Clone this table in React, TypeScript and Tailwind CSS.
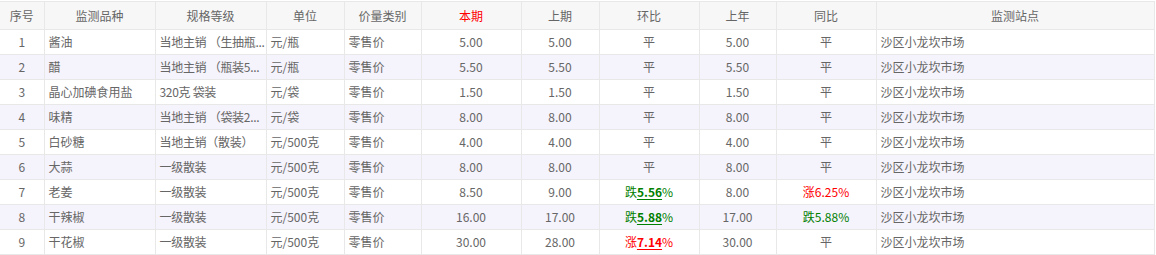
import React from 'react'

type Change = { dir: '跌' | '涨'; value: string } | null

type Row = {
  name: string
  spec: string
  unit: string
  type: string
  cur: string
  prev: string
  mom: Change
  lastYear: string
  yoy: Change
  site: string
}

// spec strings are already cut the way the source page shows them
const rows: Row[] = [
  { name: '酱油', spec: '当地主销 （生抽瓶...', unit: '元/瓶', type: '零售价', cur: '5.00', prev: '5.00', mom: null, lastYear: '5.00', yoy: null, site: '沙区小龙坎市场' },
  { name: '醋', spec: '当地主销 （瓶装5...', unit: '元/瓶', type: '零售价', cur: '5.50', prev: '5.50', mom: null, lastYear: '5.50', yoy: null, site: '沙区小龙坎市场' },
  { name: '晶心加碘食用盐', spec: '320克 袋装', unit: '元/袋', type: '零售价', cur: '1.50', prev: '1.50', mom: null, lastYear: '1.50', yoy: null, site: '沙区小龙坎市场' },
  { name: '味精', spec: '当地主销 （袋装2...', unit: '元/袋', type: '零售价', cur: '8.00', prev: '8.00', mom: null, lastYear: '8.00', yoy: null, site: '沙区小龙坎市场' },
  { name: '白砂糖', spec: '当地主销（散装）', unit: '元/500克', type: '零售价', cur: '4.00', prev: '4.00', mom: null, lastYear: '4.00', yoy: null, site: '沙区小龙坎市场' },
  { name: '大蒜', spec: '一级散装', unit: '元/500克', type: '零售价', cur: '8.00', prev: '8.00', mom: null, lastYear: '8.00', yoy: null, site: '沙区小龙坎市场' },
  { name: '老姜', spec: '一级散装', unit: '元/500克', type: '零售价', cur: '8.50', prev: '9.00', mom: { dir: '跌', value: '5.56' }, lastYear: '8.00', yoy: { dir: '涨', value: '6.25' }, site: '沙区小龙坎市场' },
  { name: '干辣椒', spec: '一级散装', unit: '元/500克', type: '零售价', cur: '16.00', prev: '17.00', mom: { dir: '跌', value: '5.88' }, lastYear: '17.00', yoy: { dir: '跌', value: '5.88' }, site: '沙区小龙坎市场' },
  { name: '干花椒', spec: '一级散装', unit: '元/500克', type: '零售价', cur: '30.00', prev: '28.00', mom: { dir: '涨', value: '7.14' }, lastYear: '30.00', yoy: null, site: '沙区小龙坎市场' },
]

function Mom({ c }: { c: Change }) {
  if (!c) return <span>平</span>
  const color = c.dir === '跌' ? 'text-[#008000]' : 'text-[#ff0000]'
  return (
    <span className={color}>
      {c.dir}
      <b className="underline underline-offset-2">{c.value}</b>%
    </span>
  )
}

function Yoy({ c }: { c: Change }) {
  if (!c) return <span>平</span>
  const color = c.dir === '跌' ? 'text-[#008000]' : 'text-[#ff0000]'
  return (
    <span className={color}>
      {c.dir}
      {c.value}%
    </span>
  )
}

const th = 'border border-[#e8e8e8] font-normal h-[28px] text-center'
const td = 'border border-[#e8e8e8] h-[25px] pl-1 pr-0 whitespace-nowrap overflow-hidden'
const tc = 'border border-[#e8e8e8] h-[25px] px-0 text-center whitespace-nowrap'

export default function App() {
  return (
    <div className="bg-white pt-px" style={{ fontFamily: '"Microsoft YaHei", "Noto Sans CJK SC", sans-serif' }}>
      <table className="table-fixed border-collapse w-[1154px] text-[12px] text-[#666] leading-none">
        <colgroup>
          <col className="w-[44px]" />
          <col className="w-[111px]" />
          <col className="w-[111px]" />
          <col className="w-[78px]" />
          <col className="w-[77px]" />
          <col className="w-[100px]" />
          <col className="w-[78px]" />
          <col className="w-[100px]" />
          <col className="w-[77px]" />
          <col className="w-[100px]" />
          <col className="w-[278px]" />
        </colgroup>
        <thead>
          <tr className="bg-[#f7f7f7]">
            <th className={`${th} border-l-0`}>序号</th>
            <th className={th}>监测品种</th>
            <th className={th}>规格等级</th>
            <th className={th}>单位</th>
            <th className={th}>价量类别</th>
            <th className={`${th} text-[#ff0000] font-bold`}>本期</th>
            <th className={th}>上期</th>
            <th className={th}>环比</th>
            <th className={th}>上年</th>
            <th className={th}>同比</th>
            <th className={th}>监测站点</th>
          </tr>
        </thead>
        <tbody>
          {rows.map((r, i) => (
            <tr key={i} className={i % 2 === 1 ? 'bg-[#f5f3fb]' : 'bg-white'}>
              <td className={`${tc} border-l-0`}>{i + 1}</td>
              <td className={td}>{r.name}</td>
              <td className={`${td} tracking-[-0.3px]`}>{r.spec}</td>
              <td className={td}>{r.unit}</td>
              <td className={td}>{r.type}</td>
              <td className={tc}>{r.cur}</td>
              <td className={tc}>{r.prev}</td>
              <td className={tc}><Mom c={r.mom} /></td>
              <td className={tc}>{r.lastYear}</td>
              <td className={tc}><Yoy c={r.yoy} /></td>
              <td className={td}>{r.site}</td>
            </tr>
          ))}
        </tbody>
      </table>
    </div>
  )
}
